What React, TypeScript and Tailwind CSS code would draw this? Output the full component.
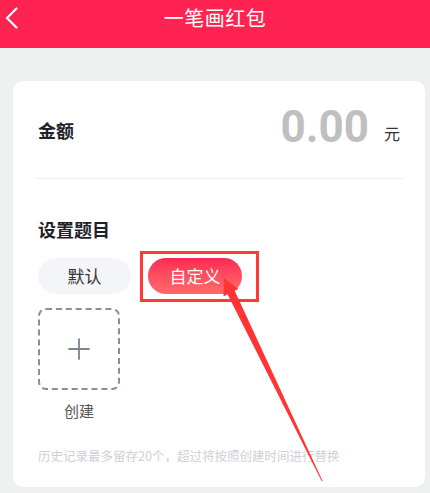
import { Plus } from "lucide-react";

const FONT = { fontFamily: '"Noto Sans CJK SC", "Noto Sans", sans-serif' };

function Arrow() {
  // red annotation arrow pointing at the custom pill
  return (
    <svg className="absolute inset-0 pointer-events-none" width="430" height="493" viewBox="0 0 430 493">
      <polygon
        points="224,278 238.5,289 234.7,290.8 322.6,481 321.6,481 227.5,294.2 223.5,296.5"
        fill="#ff3535"
      />
    </svg>
  );
}

export default function App() {
  return (
    <div className="relative w-[430px] h-[493px] overflow-hidden bg-[#eff1f1]" style={FONT}>
      <header className="relative h-[48px] bg-[#ff2351] flex justify-center pt-[4px]">
        <svg className="absolute left-[4px] top-[7px]" width="15" height="22" viewBox="0 0 15 22">
          <path d="M12.5 1.5 L3 11 L12.5 20.5" fill="none" stroke="#fff" strokeWidth="2.2" strokeLinecap="round" strokeLinejoin="round" />
        </svg>
        <h1 className="text-white text-[20px] leading-[27px] tracking-[0.5px]">一笔画红包</h1>
      </header>

      <div className="ml-[13px] mt-[33px] w-[412px] h-[406px] bg-white rounded-[10px]">
        <div className="h-[97px] flex items-center pl-[25px] pr-[25px]">
          <span className="text-[18px] font-bold text-[#1f2329] mt-[1px]">金额</span>
          <span
            className="ml-auto text-[44px] font-bold text-[#bfbfbf] leading-none -mt-[6px]"
            style={{ fontFamily: "Roboto, sans-serif" }}
          >
            0.00
          </span>
          <span className="ml-[15px] text-[16px] text-[#333] mt-[6px]">元</span>
        </div>
        <div className="mx-[22px] h-px bg-[#eef2f8]" />

        <div className="pl-[25px] pt-[39px]">
          <h2 className="text-[18px] font-bold text-[#1f2329] leading-[22px]">设置题目</h2>
          <div className="flex gap-[17px] mt-[18px]">
            <button className="w-[93px] h-[36px] rounded-full bg-[#f3f5f8] text-[17px] text-[#333]">默认</button>
            <div className="relative">
              <button className="w-[94px] h-[36px] rounded-full bg-gradient-to-b from-[#ff2552] to-[#ff6a6e] text-[17px] text-white">
                自定义
              </button>
              <div className="absolute left-[-8px] top-[-7px] w-[119px] h-[51px] border-[3px] border-[#ff3838]" />
            </div>
          </div>

          <div className="mt-[14px] w-[82px] flex flex-col items-center">
            <div className="w-[82px] h-[82px] rounded-[8px] border-2 border-dashed border-[#8a8f96] flex items-center justify-center">
              <Plus className="w-[34px] h-[34px] text-[#7a8591]" strokeWidth={1.3} />
            </div>
            <span className="mt-[10px] text-[15px] text-[#555]">创建</span>
          </div>

          <p className="mt-[25px] text-[12.5px] text-[#cdd1d6] leading-[16px]">
            历史记录最多留存20个，超过将按照创建时间进行替换
          </p>
        </div>
      </div>

      <Arrow />
    </div>
  );
}
